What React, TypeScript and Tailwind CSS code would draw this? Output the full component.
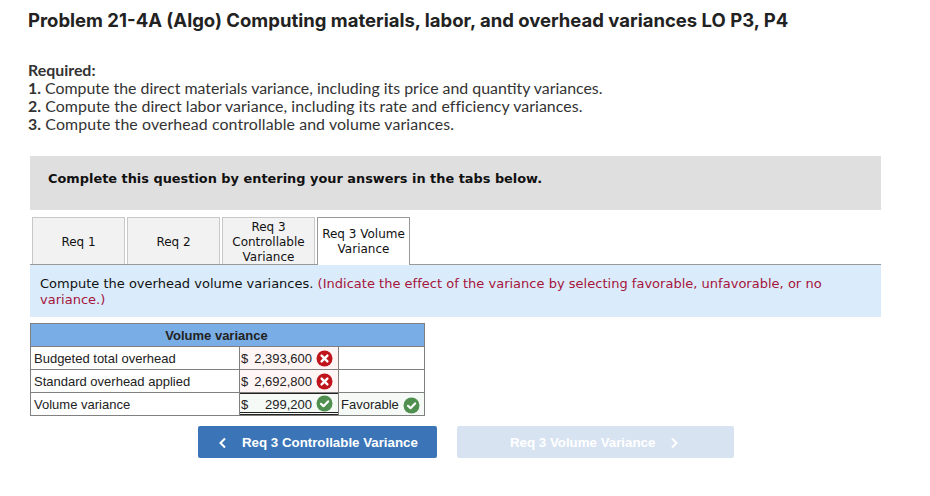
import React from 'react';

const BadIcon = () => (
  <svg width="17" height="17" viewBox="0 0 17 17" className="shrink-0">
    <circle cx="8.5" cy="8.5" r="8" fill="#c0141c" />
    <path d="M5.6 5.6l5.8 5.8M11.4 5.6l-5.8 5.8" stroke="#fff" strokeWidth="2.4" strokeLinecap="round" />
  </svg>
);

const GoodIcon = () => (
  <svg width="17" height="17" viewBox="0 0 17 17" className="shrink-0">
    <circle cx="8.5" cy="8.5" r="8" fill="#4f8f4f" />
    <path d="M5 8.8l2.5 2.4 4.6-4.8" stroke="#fff" strokeWidth="2.2" fill="none" strokeLinecap="round" strokeLinejoin="round" />
  </svg>
);

const tabs = [
  { label: 'Req 1' },
  { label: 'Req 2' },
  { label: 'Req 3 Controllable Variance' },
  { label: 'Req 3 Volume Variance', active: true },
];

const rows = [
  { label: 'Budgeted total overhead', value: '2,393,600', ok: false },
  { label: 'Standard overhead applied', value: '2,692,800', ok: false },
  { label: 'Volume variance', value: '299,200', ok: true, total: true },
];

const App: React.FC = () => {
  return (
    <div className="w-[930px] h-[496px] bg-white overflow-hidden pt-[8px] text-[#1a1a1a]">
      <h1 className="pl-7 font-['Inter',sans-serif] font-bold text-[18.5px] leading-6 text-[#222]">
        Problem 21-4A (Algo) Computing materials, labor, and overhead variances LO P3, P4
      </h1>

      <div className="pl-7 mt-[29px] font-['Lato',sans-serif] text-[15.9px] leading-[18px] text-[#333]">
        <p className="font-bold">Required:</p>
        <p><b>1.</b> Compute the direct materials variance, including its price and quantity variances.</p>
        <p className="tracking-[0.065px]"><b>2.</b> Compute the direct labor variance, including its rate and efficiency variances.</p>
        <p className="tracking-[0.1px]"><b>3.</b> Compute the overhead controllable and volume variances.</p>
      </div>

      <div className="ml-[30px] mt-[23px] w-[851px] h-[54px] bg-[#dfdfdf] pl-[18px] pt-[15px] font-['DejaVu_Sans',sans-serif] font-bold text-[12.9px] leading-4 text-[#111]">
        Complete this question by entering your answers in the tabs below.
      </div>

      {/* tabs */}
      <div className="ml-[30px] mt-[7px] w-[851px] h-[48px] pl-[2px] flex gap-[2px] border-b border-[#999] font-['DejaVu_Sans',sans-serif] text-[12px] leading-[15px] text-[#111]">
        {tabs.map(tab => (
          <div
            key={tab.label}
            className={
              tab.active
                ? 'w-[93px] h-[48px] flex items-center justify-center text-center bg-white border border-b-0 border-[#999] px-1 -mb-px'
                : 'w-[93px] h-[47px] pt-[2px] flex items-center justify-center text-center bg-[#f2f2f2] border border-b-0 border-[#c8c8c8] px-3'
            }
          >
            {tab.label}
          </div>
        ))}
      </div>

      <div className="ml-[30px] w-[851px] h-[52px] bg-[#daecfb] px-[10px] pt-[11px] font-['DejaVu_Sans',sans-serif] text-[13px] leading-4 text-[#111]">
        Compute the overhead volume variances.{' '}
        <span className="text-[#a5143c] tracking-[0.015px]">(Indicate the effect of the variance by selecting favorable, unfavorable, or no variance.)</span>
      </div>

      {/* table */}
      <div className="ml-[30px] mt-[6px] w-[395px] border border-[#808080] font-['Liberation_Sans',sans-serif] text-[13px] text-[#222]">
        <div className="h-[23px] pt-[2px] pr-[22px] bg-[#79ade6] border-b border-[#808080] flex items-center justify-center font-bold">
          Volume variance
        </div>
        {rows.map((row, i) => (
          <div key={row.label} className={i < 2 ? 'flex h-[23px] border-b border-[#808080]' : 'flex h-[22px]'}>
            <div className="w-[209px] pl-[3px] pt-[2px] flex items-center border-r border-[#808080]">{row.label}</div>
            <div
              className={
                row.total
                  ? 'w-[98px] pl-[1px] pr-[5px] flex items-center justify-between bg-[#f6faf6] border-t border-t-[#222] border-b-[3px] border-b-[#222] border-double'
                  : 'w-[98px] pl-[1px] pr-[5px] pt-[1px] flex items-center justify-between bg-[#fff5f5]'
              }
            >
              <span className={row.total ? 'mt-[3px]' : ''}>$</span>
              <span className={row.total ? 'ml-auto mr-[4px] mt-[3px]' : 'ml-auto mr-[4px]'}>{row.value}</span>
              {row.ok ? <GoodIcon /> : <BadIcon />}
            </div>
            <div
              className={
                row.total
                  ? 'flex-1 pl-[2px] pt-[2px] flex items-center gap-[4px] bg-[#f6faf6] border-l border-[#808080]'
                  : 'flex-1 border-l border-[#808080]'
              }
            >
              {row.total && <>Favorable <GoodIcon /></>}
            </div>
          </div>
        ))}
      </div>

      {/* nav buttons */}
      <div className="ml-[198px] mt-[10px] flex gap-[20px] font-['Liberation_Sans',sans-serif] font-bold text-[13.3px]">
        <div className="w-[239px] h-[32px] pt-[1px] rounded-[2px] bg-[#3b75b8] text-white flex items-center pl-[20px]">
          <svg width="9" height="12" viewBox="0 0 9 12" className="mr-[15px]">
            <path d="M7 1.5L2.5 6 7 10.5" stroke="#fff" strokeWidth="2" fill="none" />
          </svg>
          Req 3 Controllable Variance
        </div>
        <div className="w-[277px] h-[32px] pt-[1px] rounded-[2px] bg-[#d8e3f1] text-white flex items-center pl-[53px]">
          Req 3 Volume Variance
          <svg width="9" height="12" viewBox="0 0 9 12" className="ml-[15px]">
            <path d="M2 1.5L6.5 6 2 10.5" stroke="#fff" strokeWidth="2" fill="none" />
          </svg>
        </div>
      </div>
    </div>
  );
};

export default App;
